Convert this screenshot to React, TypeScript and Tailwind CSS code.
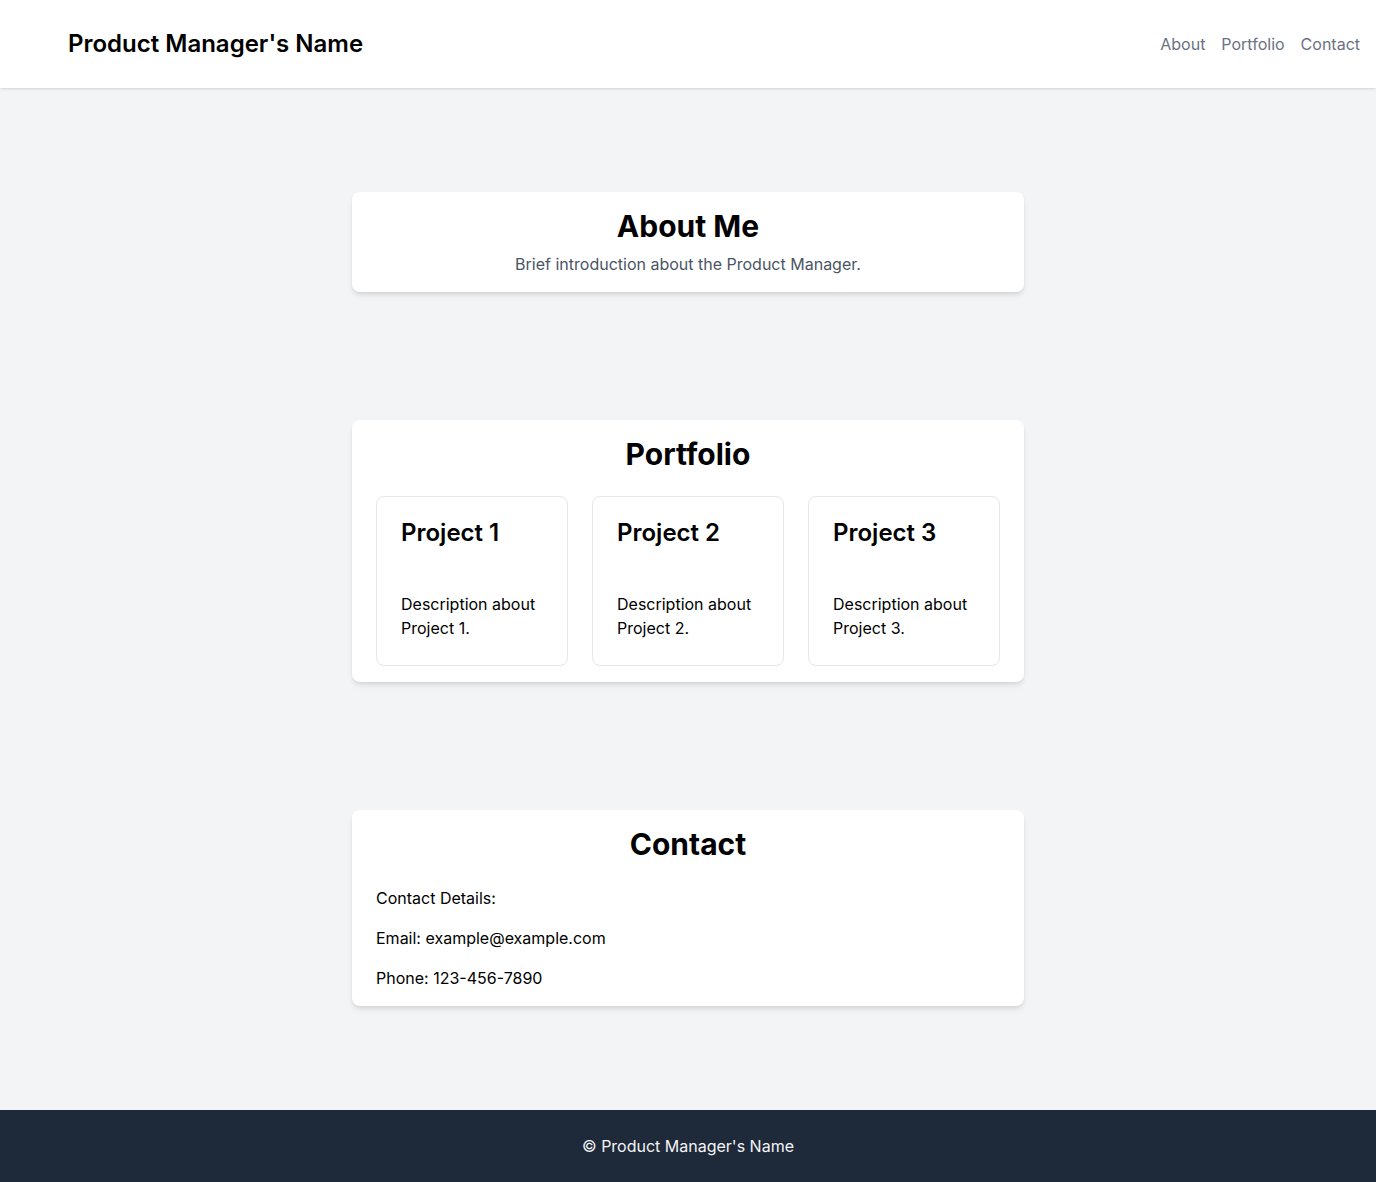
import React from "react";

const projects = [
	{ title: "Project 1", desc: "Description about Project 1." },
	{ title: "Project 2", desc: "Description about Project 2." },
	{ title: "Project 3", desc: "Description about Project 3." },
];

const Header = () => (
	<header className="bg-white shadow-sm relative z-10">
		<div className="flex items-center justify-between h-[88px] pl-[68px] pr-4">
			<h1 className="text-2xl font-semibold text-black">Product Manager's Name</h1>
			<nav className="flex items-center gap-4 text-base text-gray-500">
				<a href="#about">About</a>
				<a href="#portfolio">Portfolio</a>
				<a href="#contact">Contact</a>
			</nav>
		</div>
	</header>
);

const Card = ({ id, children }: { id: string; children: React.ReactNode }) => (
	<section id={id} className="py-16">
		<div className="max-w-2xl mx-auto bg-white rounded-lg shadow-md px-6 py-4">
			{children}
		</div>
	</section>
);

export default function App() {
	return (
		<div className="min-h-screen flex flex-col bg-gray-100 text-black font-['Inter',sans-serif]">
			<Header />

			<main className="flex-1 py-10">
				<Card id="about">
					<h2 className="text-3xl font-bold text-center mb-2">About Me</h2>
					<p className="text-center text-gray-600">
						Brief introduction about the Product Manager.
					</p>
				</Card>

				<Card id="portfolio">
					<h2 className="text-3xl font-bold text-center mb-6">Portfolio</h2>
					<div className="grid grid-cols-3 gap-6">
						{projects.map((p) => (
							<div
								key={p.title}
								className="border border-gray-200 rounded-lg px-6 pt-5 pb-[25px]"
							>
								<h3 className="text-2xl font-semibold mb-[43px]">{p.title}</h3>
								<p>{p.desc}</p>
							</div>
						))}
					</div>
				</Card>

				<Card id="contact">
					<h2 className="text-3xl font-bold text-center mb-6">Contact</h2>
					<div className="flex flex-col gap-4">
						<p>Contact Details:</p>
						<p>Email: example@example.com</p>
						<p>Phone: 123-456-7890</p>
					</div>
				</Card>
			</main>

			<footer className="bg-gray-800 text-gray-100 text-center py-6">
				© Product Manager's Name
			</footer>
		</div>
	);
}
